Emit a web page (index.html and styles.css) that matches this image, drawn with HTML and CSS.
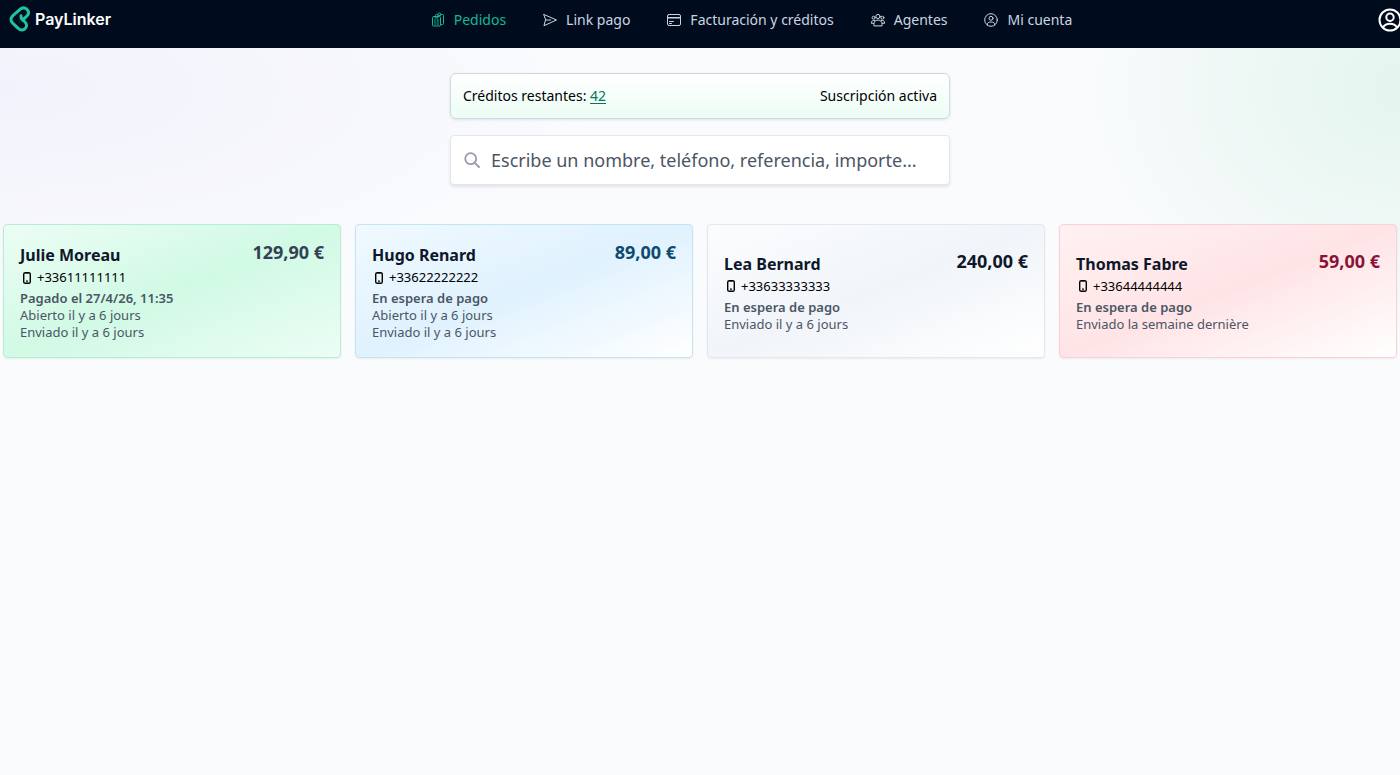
FILE: index.html
```html
<!DOCTYPE html>
<html lang="es">
<head>
<meta charset="utf-8">
<meta name="viewport" content="width=device-width, initial-scale=1">
<title>PayLinker - Pedidos</title>
<link rel="stylesheet" href="styles.css">
</head>
<body>
<svg class="sprite" aria-hidden="true">
  <symbol id="phone" viewBox="0 0 14 14"><rect x="3.7" y="1.7" width="6.6" height="10.6" rx="1.6" fill="none" stroke="currentColor" stroke-width="1.4"/><path d="M5.5 1.5h3v1h-3zM6 9.6h2v1.2H6z" fill="currentColor"/></symbol>
  <symbol id="user" viewBox="0 0 24 24"><circle cx="12" cy="12" r="10.5"/><circle cx="12" cy="9.2" r="3.7"/><path d="M5 19.5c1.6-2.7 4-3.7 7-3.7s5.400 1 7 3.700"/></symbol>
</svg>
<header class="header">
  <a class="brand" href="#">
    <svg class="brand-mark" viewBox="0 0 22 26" aria-hidden="true"><path d="M13.500 14 17.600 10.400C19.500 8.700 20 6.800 19.100 4.800 17.600 1.500 13.600 1 11 3.300L3.900 9.700C1.300 12.200 1.300 14.900 3.700 17.200l5.500 5.200c2 1.900 4.500 2 6.500.6 2.100-1.600 2.400-4.200.9-6.200L12.300 12.500 12 9.800"/></svg>
    <span>PayLinker</span>
  </a>
  <nav class="nav">
    <a class="nav-link active" href="#"><svg class="nav-icon" viewBox="0 0 16 16" aria-hidden="true"><path d="M5.500 4.500V3.500a1 1 0 0 1 1-1h1.300a1.500 1.500 0 0 1 3 0h1.700a1 1 0 0 1 1 1v8a1 1 0 0 1-1 1h-1M7.800 2.500v1h3v-1"/><rect x="2.500" y="4.500" width="8" height="9.500" rx="1"/><path d="M5 4.500v1.400h3V4.500M4.500 8h1M7 8h1.500M4.500 10h1M7 10h1.500M4.500 12h1M7 12h1.500"/></svg><span>Pedidos</span></a>
    <a class="nav-link" href="#"><svg class="nav-icon" viewBox="0 0 16 16" aria-hidden="true"><path d="M2 2.500 14.500 8 2 13.700 3.500 8zM3.500 8h5.200"/></svg><span>Link pago</span></a>
    <a class="nav-link" href="#"><svg class="nav-icon" viewBox="0 0 16 16" aria-hidden="true"><rect x="1.500" y="2.500" width="13" height="11" rx="1.500"/><path d="M1.500 5.500h13M1.500 6h13M3.500 9.500h4M3.500 11.500h2"/></svg><span>Facturación y créditos</span></a>
    <a class="nav-link" href="#"><svg class="nav-icon" viewBox="0 0 16 16" aria-hidden="true"><circle cx="8" cy="4.500" r="2.100"/><circle cx="3.600" cy="5.700" r="1.500"/><circle cx="12.400" cy="5.700" r="1.500"/><path d="M3.900 13.500c-.3-3.600 1.300-5.400 4.100-5.400s4.400 1.800 4.100 5.400zM5 8.500C2.800 7.700 1.500 8.800 1.400 11.300h2.400M11 8.500c2.200-.8 3.500.3 3.600 2.800h-2.400"/></svg><span>Agentes</span></a>
    <a class="nav-link" href="#"><svg class="nav-icon" viewBox="0 0 16 16" aria-hidden="true"><circle cx="8" cy="8" r="6.300"/><circle cx="8" cy="6.300" r="2"/><path d="M4.300 13c-.2-2.300 1.200-3 3.700-3s3.900.7 3.700 3"/></svg><span>Mi cuenta</span></a>
  </nav>
  <button class="account" type="button" aria-label="Cuenta"><svg class="account-icon" aria-hidden="true"><use href="#user"/></svg></button>
</header>
<main class="main">
  <div class="tools">
    <section class="credits"><span>Créditos restantes: <a class="credits-link" href="#">42</a></span><span>Suscripción activa</span></section>
    <label class="search">
      <svg class="search-icon" viewBox="0 0 16 16" aria-hidden="true"><circle cx="6.700" cy="6.700" r="5.500"/><path d="m10.800 10.800 4.200 4.200"/></svg>
      <input class="search-input" type="text" aria-label="Buscar pedidos" placeholder="Escribe un nombre, teléfono, referencia, importe...">
    </label>
  </div>
  <section class="orders">
    <article class="card paid">
      <div class="card-body">
        <div><h2 class="name">Julie Moreau</h2><p class="phone"><svg class="phone-icon" aria-hidden="true"><use href="#phone"/></svg>+33611111111</p><p class="status">Pagado el 27/4/26, 11:35</p><p class="event">Abierto il y a 6 jours</p><p class="event">Enviado il y a 6 jours</p></div>
        <strong class="amount">129,90 €</strong>
      </div>
    </article>
    <article class="card opened">
      <div class="card-body">
        <div><h2 class="name">Hugo Renard</h2><p class="phone"><svg class="phone-icon" aria-hidden="true"><use href="#phone"/></svg>+33622222222</p><p class="status">En espera de pago</p><p class="event">Abierto il y a 6 jours</p><p class="event">Enviado il y a 6 jours</p></div>
        <strong class="amount">89,00 €</strong>
      </div>
    </article>
    <article class="card sent">
      <div class="card-body">
        <div><h2 class="name">Lea Bernard</h2><p class="phone"><svg class="phone-icon" aria-hidden="true"><use href="#phone"/></svg>+33633333333</p><p class="status">En espera de pago</p><p class="event">Enviado il y a 6 jours</p></div>
        <strong class="amount">240,00 €</strong>
      </div>
    </article>
    <article class="card late">
      <div class="card-body">
        <div><h2 class="name">Thomas Fabre</h2><p class="phone"><svg class="phone-icon" aria-hidden="true"><use href="#phone"/></svg>+33644444444</p><p class="status">En espera de pago</p><p class="event">Enviado la semaine dernière</p></div>
        <strong class="amount">59,00 €</strong>
      </div>
    </article>
  </section>
</main>
</body>
</html>
```
FILE: styles.css
```css
* { box-sizing: border-box; }
body {
  margin: 0;
  min-height: 100vh;
  font-family: "Noto Sans", sans-serif;
  font-size: 14px;
  line-height: 20px;
  color: #000;
  background: #fafbfd;
  overflow-x: hidden;
}
a { color: inherit; text-decoration: none; }
h2, p { margin: 0; }
.sprite { display: none; }
.header {
  display: flex;
  align-items: flex-start;
  height: 48px;
  background: #000c1d;
}
.brand {
  display: flex;
  align-items: center;
  gap: 4px;
  width: 124px;
  height: 38px;
  padding-left: 9px;
  color: #fff;
  font: 600 16px/24px Inter, sans-serif;
}
.brand-mark {
  width: 22px;
  height: 26px;
  fill: none;
  stroke: #1dc3a2;
  stroke-width: 3;
  stroke-linecap: round;
  stroke-linejoin: round;
}
.nav { flex: 1; display: flex; justify-content: center; gap: 36px; }
.nav-link {
  display: flex;
  align-items: center;
  gap: 8px;
  height: 40px;
  color: #cbd5e1;
  white-space: nowrap;
}
.nav-link.active { color: #14b895; }
.nav-icon { width: 16px; height: 16px; fill: none; stroke: currentColor; stroke-width: 1; stroke-linejoin: round; stroke-linecap: round; }
.account {
  flex: none;
  width: 22px;
  height: 40px;
  padding: 0;
  border: 0;
  background: none;
  color: #fff;
  display: flex;
  align-items: center;
  overflow: visible;
}
.account-icon { flex: none; width: 24px; height: 24px; fill: none; stroke: currentColor; stroke-width: 2; }
.main {
  min-height: calc(100vh - 48px);
  padding: 25px 3px;
  background:
    radial-gradient(ellipse 600px 220px at 0 40px, #f2f2fc, #f2f2fc00) no-repeat,
    radial-gradient(ellipse 330px 260px at 100% 40px, #e3f5ee, #e3f5ee00) no-repeat,
    #fafbfd;
}
.tools { display: grid; gap: 16px; max-width: 500px; margin: 0 auto 39px; }
.credits, .search {
  display: flex;
  align-items: center;
  border: 1px solid #cfd8e3;
  border-radius: 6px;
  box-shadow: 0 1px 3px #00000018;
}
.credits {
  justify-content: space-between;
  height: 46px;
  padding: 0 12px;
  background: linear-gradient(#fff, #ecfdf5);
}
.credits-link { color: #047857; text-decoration: underline; text-underline-offset: 2px; }
.search {
  gap: 11px;
  height: 50px;
  padding: 0 13px;
  border-color: #e3e6eb;
  border-radius: 4px;
  background: #fff;
  box-shadow: 0 2px 3px #00000018;
}
.search-icon { width: 16px; height: 16px; fill: none; stroke: #9a9ba8; stroke-width: 1.8; stroke-linecap: round; }
.search-input {
  flex: 1;
  min-width: 0;
  padding: 0;
  border: 0;
  outline: 0;
  background: none;
  font: 18px/28px "Noto Sans", sans-serif;
  color: #0f172a;
}
.search-input::placeholder { color: #4b5565; opacity: 1; }
.orders { display: grid; grid-template-columns: repeat(auto-fit, minmax(300px, 1fr)); gap: 14px; }
.card {
  display: flex;
  align-items: center;
  padding: 16px;
  border: 1px solid;
  border-radius: 4px;
  box-shadow: 0 1px 2px #00000010;
}
.card-body { flex: 1; display: flex; justify-content: space-between; gap: 12px; }
.name { font-size: 16px; line-height: 28px; font-weight: 700; color: #0f172a; }
.phone { display: flex; align-items: center; font-size: 13px; line-height: 17px; padding-bottom: 4px; gap: 3px; }
.phone-icon { width: 14px; height: 14px; }
.status, .event { font-size: 13px; line-height: 17px; color: #4b5565; }
.status { font-weight: 600; }
.amount { font-size: 18px; line-height: 22px; font-weight: 700; white-space: nowrap; }
.paid { border-color: #b5efd3; background: linear-gradient(to bottom right, #ecfdf5, #d1fae5, #ecfdf5); }
.paid .amount { color: #334155; }
.opened { border-color: #c3e4f5; background: linear-gradient(to bottom right, #f0f9ff, #e0f2fe, #fff); }
.opened .amount { color: #0c4a6e; }
.sent { border-color: #e2e8f0; background: linear-gradient(to bottom right, #fbfcfe, #f1f5f9, #fff); }
.sent .amount { color: #0f172a; }
.late { border-color: #fbd0d6; background: linear-gradient(to bottom right, #fff1f2, #ffe4e6, #fff); }
.late .amount { color: #881337; }
```
